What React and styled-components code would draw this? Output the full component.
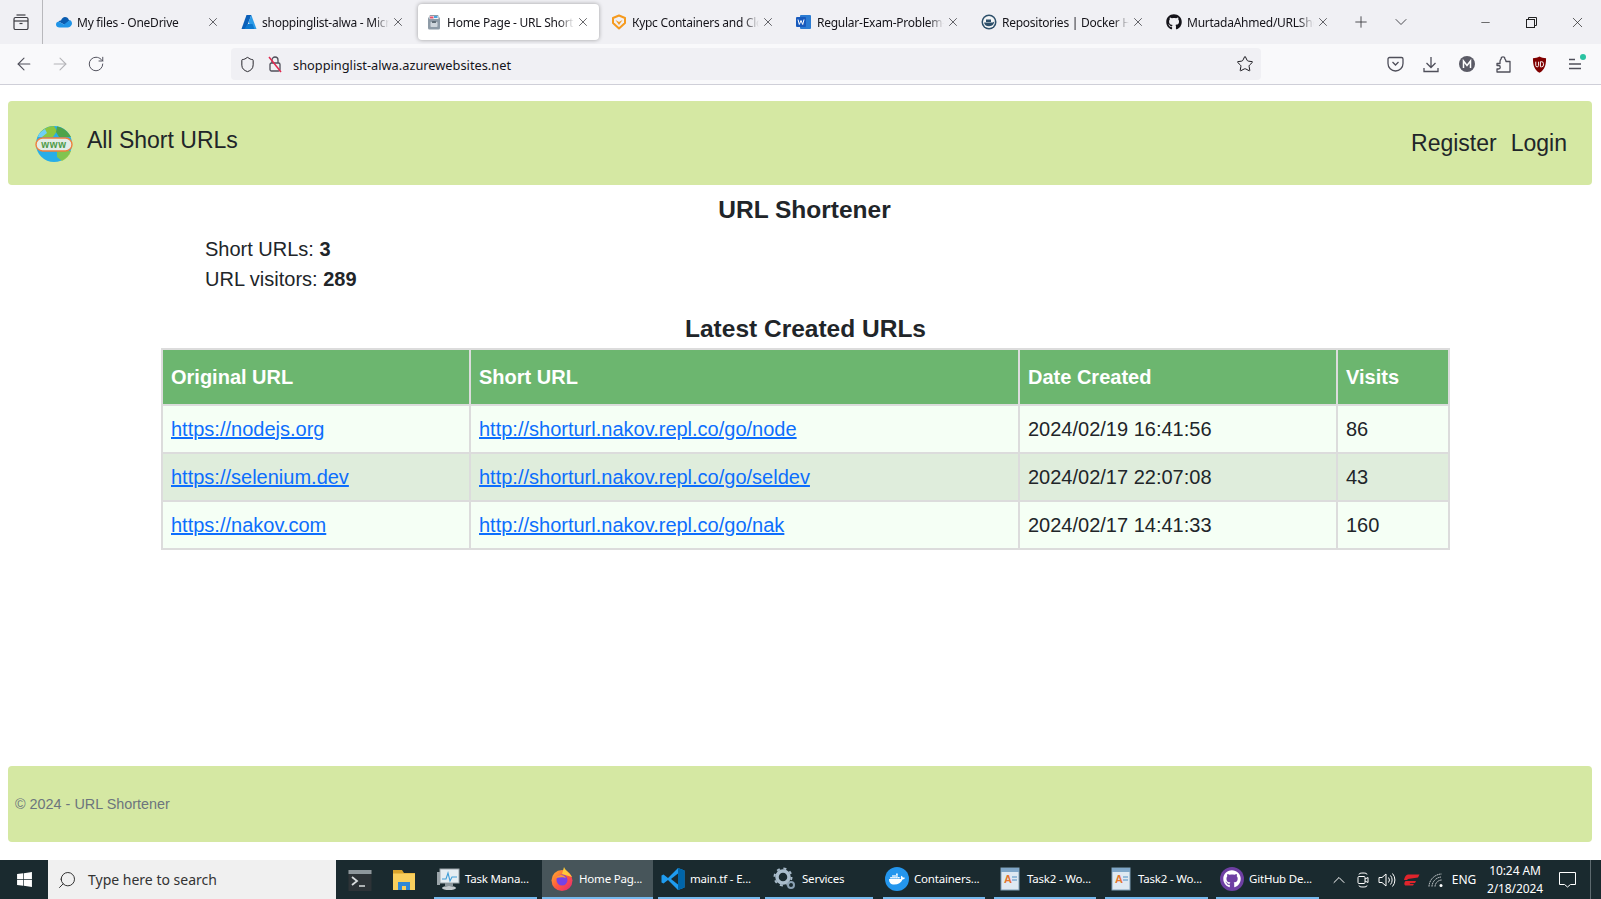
import React from "react";
import styled, { createGlobalStyle } from "styled-components";
import { ArrowLeft, ArrowRight, RotateCw, Shield, Star, X, Plus, ChevronDown, ChevronUp, Minus, Search } from "lucide-react";
import { FaGithub, FaWindows, FaDocker } from "react-icons/fa";

const Global = createGlobalStyle`
  html, body { margin: 0; padding: 0; background: #fff; }
  body { font-family: "Liberation Sans", Arial, sans-serif; color: #212529; }
  * { box-sizing: border-box; }
`;

const Page = styled.div`
  width: 1601px; height: 899px; display: flex; flex-direction: column; overflow: hidden;
`;

/* ---------- browser chrome ---------- */
const TabStrip = styled.div`
  height: 44px; flex: none; background: #f0f0f4; display: flex; align-items: center; color: #15141a;
  font-family: "Noto Sans", sans-serif; font-size: 12px;
`;
const TabListButton = styled.div`
  width: 43px; height: 44px; border-right: 1px solid #b8b8bc; display: flex; align-items: center; justify-content: center; flex: none;
`;
const Tabs = styled.div`
  display: flex; gap: 4px; margin-left: 5px;
`;
const Tab = styled.div`
  width: 181px; height: 36px; border-radius: 4px; display: flex; align-items: center; padding: 0 8px; flex: none;
  background: ${p => (p.$active ? "#fff" : "transparent")};
  box-shadow: ${p => (p.$active ? "0 0 4px rgba(0,0,0,.35)" : "none")};
`;
const FavSlot = styled.span`
  width: 16px; height: 16px; flex: none; display: flex; align-items: center; justify-content: center; margin-right: 5px;
`;
const TabTitle = styled.span`
  flex: 1; min-width: 0; white-space: nowrap; overflow: hidden; letter-spacing: -0.25px;
  -webkit-mask-image: linear-gradient(to right, #000 88%, transparent 100%);
  mask-image: linear-gradient(to right, #000 88%, transparent 100%);
`;
const TabClose = styled.span`
  width: 14px; height: 14px; flex: none; display: flex; align-items: center; justify-content: center; margin-left: 2px; margin-right: 1px;
`;
const StripAction = styled.span`
  display: flex; align-items: center; justify-content: center; flex: none; width: 40px; color: #3c3c42;
`;
const StripActions = styled.div`
  display: flex; margin-left: 2px;
`;
const WindowControls = styled.div`
  display: flex; margin-left: auto; margin-right: 1px; color: #222;
`;
const WindowButton = styled.span`
  width: 46px; display: flex; align-items: center; justify-content: center;
`;
const Toolbar = styled.div`
  height: 41px; flex: none; background: #f9f9fb; border-bottom: 1px solid #cfcfd8; display: flex; align-items: flex-start; color: #4f4f5a;
`;
const NavButtons = styled.div`
  display: flex; width: 231px; padding-left: 6px; height: 40px; align-items: center;
`;
const ToolButton = styled.span`
  width: 36px; flex: none; display: flex; align-items: center; justify-content: center; position: relative;
  color: ${p => (p.$dim ? "#b4b4b8" : "inherit")};
`;
const UrlBar = styled.div`
  width: 1030px; height: 32px; margin-top: 4px; border-radius: 4px; background: #f0f0f4; display: flex; align-items: center; padding: 0 7px 0 2px;
  font-family: "Noto Sans", sans-serif; font-size: 12.8px; color: #15141a;
`;
const UrlIcon = styled.span`
  width: 28px; flex: none; display: flex; align-items: center; justify-content: center;
`;
const UrlText = styled.span`
  margin-left: 4px; padding-top: 1px; flex: 1;
`;
const ToolRight = styled.div`
  display: flex; margin-left: auto; height: 40px; align-items: center; padding-right: 8px;
`;
const Dot = styled.span`
  position: absolute; top: -4px; right: 7px; width: 6px; height: 6px; border-radius: 50%; background: #2ac3a2;
`;

/* ---------- page content ---------- */
const Main = styled.main`
  flex: 1; padding: 16px 9px 18px 8px; display: flex; flex-direction: column; min-height: 0;
`;
const Navbar = styled.nav`
  height: 84px; flex: none; background: #d5e8a3; border-radius: 4px; display: flex; align-items: center; padding: 0 25px 0 27px;
`;
const Brand = styled.div`
  display: flex; align-items: center; gap: 14px; font-size: 23px; margin-top: 2px;
`;
const BrandText = styled.span`
  margin-bottom: 7px;
`;
const NavLinks = styled.div`
  margin-left: auto; display: flex; gap: 14px; font-size: 23px;
`;
const Section = styled.section`
  flex: 1; padding: 10px 144px 0 153px; display: flex; flex-direction: column; min-height: 0;
`;
const Title = styled.h1`
  margin: 0; font-size: 24.5px; line-height: 30px; font-weight: 700; text-align: center;
`;
const Stats = styled.div`
  margin: 9px 0 0 44px; font-size: 20px; line-height: 30px;
`;
const Table = styled.table`
  width: 100%; border-collapse: collapse; table-layout: fixed; font-size: 20px;
`;
const Caption = styled.caption`
  caption-side: top; padding: 0; font-size: 24.5px; line-height: 30px; font-weight: 700; text-align: center; color: #212529; margin-bottom: 4px;
`;
const TableWrap = styled.div`
  margin-top: 20px;
`;
const Th = styled.th`
  height: 56px; background: #6cb66f; color: #fff; border: 2px solid #dcdcdc; text-align: left; padding: 0 8px; font-weight: 700;
  width: ${p => p.$w}px;
`;
const Row = styled.tr`
  background: ${p => (p.$alt ? "#dfeddc" : "#f5fff5")};
`;
const Td = styled.td`
  height: 48px; border: 2px solid #dcdcdc; padding: 0 8px;
`;
const Link = styled.a`
  color: #0d6efd; text-decoration: underline;
`;
const Footer = styled.footer`
  height: 76px; flex: none; background: #d5e8a3; border-radius: 4px; display: flex; align-items: center; padding: 0 7px;
  font-size: 14.4px; color: #6c757d;
`;

/* ---------- taskbar ---------- */
const Taskbar = styled.div`
  height: 39px; flex: none; background: #1a2a2f; display: flex; align-items: center; color: #fff;
  font-family: "Noto Sans", sans-serif; font-size: 11.5px;
`;
const StartButton = styled.div`
  width: 48px; height: 39px; display: flex; align-items: center; justify-content: center; flex: none;
`;
const SearchBox = styled.div`
  width: 288px; height: 39px; background: #f0f0f0; color: #333; display: flex; align-items: center; padding-left: 9px; gap: 11px; font-size: 14px; flex: none;
`;
const PinnedIcons = styled.div`
  display: flex; margin-left: 2px; flex: none;
`;
const PinnedIcon = styled.div`
  width: 44px; height: 39px; display: flex; align-items: center; justify-content: center; flex: none;
`;
const TaskItems = styled.div`
  display: flex; gap: 5px; height: 39px; margin-left: 8px;
`;
const TaskItem = styled.div`
  width: ${p => p.$w}px; height: 39px; display: flex; align-items: center; gap: 5px; padding: 0 0 0 ${p => p.$pl}px; white-space: nowrap; overflow: hidden;
  margin-left: ${p => p.$ml || 0}px; letter-spacing: -0.2px;
  border-bottom: 2px solid #76b9ed;
  background: ${p => (p.$active ? "#47555a" : "transparent")};
`;
const TaskIcon = styled.span`
  width: 24px; height: 24px; flex: none; display: flex; align-items: center; justify-content: center;
`;
const Tray = styled.div`
  margin-left: auto; display: flex; align-items: center; height: 39px;
`;
const TrayIcon = styled.span`
  width: ${p => p.$w || 24}px; flex: none; display: flex; align-items: center; justify-content: center; font-size: 12px;
`;
const Clock = styled.div`
  width: 70px; text-align: center; font-size: 12px; line-height: 18px; margin-left: 1px; letter-spacing: -0.1px;
`;
const Notify = styled.span`
  width: 34px; display: flex; justify-content: center; margin-right: 6px;
`;
const ShowDesktop = styled.span`
  width: 1px; height: 39px; background: #5d6a6f; margin-right: 10px;
`;
const Circle = styled.span`
  width: 24px; height: 24px; border-radius: 50%; background: ${p => p.$bg}; display: flex; align-items: center; justify-content: center;
`;

/* ---------- drawn icons ---------- */
const OneDriveIcon = () => (
  <svg width="16" height="12" viewBox="0 0 16 12"><path d="M5 4.500C5.800 2.200 7.300 1 9 1c1.900 0 3.400 1.200 3.900 3 .3 0 .6 0 .9.100L9 9 2.500 5.500C3 5 4 4.500 5 4.500z" fill="#0a5cb0"/><path d="M3.500 11.500C1.500 11.500 0 10.200 0 8.400 0 7 .9 5.900 2.500 5.500L8 8.500l5.800-4.400C15 4.500 16 5.800 16 7.500c0 .9-.4 1.700-1 2.300-.8 1-2 1.700-3 1.700z" fill="#1f94e8"/></svg>
);
const AzureIcon = () => (
  <svg width="16" height="16" viewBox="0 0 16 16"><path d="M5.500 1h4.800L5 15H.5z" fill="#0a5fb8"/><path d="M10.300 1 15.500 15H11L7.500 8z" fill="#2b9be8"/><path d="M6.500 10h5l2 5H3.500z" fill="#0b78d0"/></svg>
);
const PageIcon = () => (
  <svg width="16" height="16" viewBox="0 0 16 16"><path d="M2 4.500 4 1h8l2 3.500V14a1.500 1.500 0 0 1-1.500 1.500h-9A1.500 1.500 0 0 1 2 14z" fill="#8e9ba7"/><rect x="3.500" y="2" width="9" height="3" fill="#f2f4f6"/><rect x="4" y="2.500" width="3.500" height="2" fill="#e8506a"/><rect x="8" y="2" width="3.500" height="2" fill="#4aa3df"/><rect x="4.500" y="8" width="7" height="5" rx=".8" fill="#cfd6dc"/><rect x="6" y="7" width="4" height="2" rx=".5" fill="#5f6c76"/></svg>
);
const FoxIcon = () => (
  <svg width="16" height="16" viewBox="0 0 16 16"><path d="M8 1.500 14 4v5l-6 5.500L2 9V4z" fill="none" stroke="#f59a1e" strokeWidth="2" strokeLinejoin="round"/><path d="M4.500 6 8 8l3.500-2L8 11z" fill="#f59a1e"/></svg>
);
const WordIcon = () => (
  <svg width="16" height="16" viewBox="0 0 16 16"><rect x="4" y="1" width="11" height="14" rx="1" fill="#2b7cd3"/><rect x="0" y="3" width="10" height="10" rx="1" fill="#185abd"/><path d="m2 5.500 1.300 5L5 6.500l1.700 4 1.300-5" fill="none" stroke="#fff" strokeWidth="1"/></svg>
);
const DockerCircle = ({ size = 16, fill = "#2d4f6a" }) => (
  <svg width={size} height={size} viewBox="0 0 16 16"><circle cx="8" cy="8" r="7.500" fill={fill}/><circle cx="8" cy="8" r="6" fill="#fff" opacity=".95"/><path d="M3 8.500h8.500c1 0 1.500-.8 1.800-1.200.2 1.800-1.500 5-5.300 5-3.200 0-4.500-1.800-5-3.800z" fill={fill}/><rect x="5" y="5.500" width="5" height="2.500" fill={fill}/></svg>
);
const LockOff = () => (
  <svg width="16" height="18" viewBox="0 0 16 18" fill="none" stroke="#4f4f5a" strokeWidth="1.300"><rect x="3" y="8" width="10" height="8" rx="1.500"/><path d="M5 8V5a3 3 0 0 1 6 0v3"/><path d="M2 2l12 15" stroke="#e22850" strokeWidth="1.500"/></svg>
);
const Pocket = () => (
  <svg width="17" height="16" viewBox="0 0 17 16" fill="none" stroke="#4f4f5a" strokeWidth="1.300"><path d="M2.500 1.500h12A1.500 1.500 0 0 1 16 3v4.500a7.500 7.500 0 0 1-15 0V3a1.500 1.500 0 0 1 1.500-1.500z"/><path d="m5.500 6 3 3 3-3"/></svg>
);
const DownloadIcon = () => (
  <svg width="16" height="17" viewBox="0 0 16 17" fill="none" stroke="#4f4f5a" strokeWidth="1.300"><path d="M8 1v10M3.500 7 8 11.500 12.500 7"/><path d="M1 12v3.500h14V12"/></svg>
);
const Puzzle = () => (
  <svg width="15" height="17" viewBox="0 0 15 17" fill="none" stroke="#4f4f5a" strokeWidth="1.300"><path d="M1 7.500h3V5.500C4 4 5 3 5.300 2.500 5 1.500 6 .8 7 .8s2 .7 1.700 1.700C9 3 10 4 10 5.500h4v10.500H1v-3h1.500a1.700 1.700 0 0 0 0-3.500H1z" strokeLinejoin="round"/></svg>
);
const UBlock = () => (
  <svg width="15" height="17" viewBox="0 0 16 18"><path d="M8 0.500c2 1.200 4.500 1.700 7 1.800 0 7.500-1.500 12.500-7 15.500-5.500-3-7-8-7-15.500 2.500-.1 5-.6 7-1.800z" fill="#800000"/><path d="M4 6v4a1.500 1.500 0 0 0 3 0V6M9 6v5.500h1.200a2 2 0 0 0 2-2V8a2 2 0 0 0-2-2z" fill="none" stroke="#fff" strokeWidth="1"/></svg>
);
const Avatar = () => (
  <svg width="16" height="16" viewBox="0 0 16 16"><circle cx="8" cy="8" r="8" fill="#5b5b66"/><path d="M4.500 12V5l3.500 4.500L11.500 5v7" fill="none" stroke="#fff" strokeWidth="1.500"/></svg>
);
const MenuIcon = () => (
  <svg width="14" height="12" viewBox="0 0 14 12" fill="none" stroke="#4f4f5a" strokeWidth="1.300"><path d="M1 1.500h6M1 6h12M1 10.500h12"/></svg>
);
const TabsIcon = () => (
  <svg width="16" height="16" viewBox="0 0 16 16" fill="none" stroke="#3c3c42" strokeWidth="1.200"><rect x="1" y="3.500" width="14" height="12" rx="1.500"/><path d="M3.500 1h9"/><path d="M1 7h14"/><path d="M6.500 9.500h3"/></svg>
);
const RestoreIcon = () => (
  <svg width="11" height="11" viewBox="0 0 11 11" fill="none" stroke="#222" strokeWidth="1"><rect x="0.500" y="2.500" width="8" height="8"/><path d="M2.500 2.500v-2h8v8h-2"/></svg>
);
const Globe = () => (
  <svg width="38" height="38" viewBox="0 0 38 38">
    <circle cx="19" cy="19" r="18" fill="#27aee8"/>
    <path d="M9 4a18 18 0 0 1 10-3l3 5-4 6H4C4 9 6 6 9 4z" fill="#8cc63f"/>
    <path d="M22 1.500c6 1 11 5 14 10.500H24l-3-5z" fill="#4ea34a"/>
    <path d="M22 26h14c-1.500 4.500-5 8-9 10l-5-4z" fill="#8cc63f" opacity=".9"/>
    <path d="M4 9a18 18 0 0 1 6-5l2 4-5 4H3z" fill="#6fd0f5"/>
    <rect x="1" y="13" width="36" height="13" rx="6.500" fill="#e3ece6" stroke="#f07f3c" strokeWidth="1.400"/>
    <text x="19" y="23" textAnchor="middle" fontFamily="Liberation Sans, sans-serif" fontWeight="700" fontSize="10" letterSpacing=".8" fill="#4e9b47">www</text>
  </svg>
);
const TerminalIcon = () => (
  <svg width="24" height="24" viewBox="0 0 24 24"><rect x="0.500" y="2" width="23" height="21" fill="#2d3337"/><rect x="0.500" y="2" width="23" height="4" fill="#8e979c"/><path d="m4 9 5 4-5 4" fill="none" stroke="#d8dcde" strokeWidth="1.800"/><path d="M11 18h6" stroke="#d8dcde" strokeWidth="1.500"/></svg>
);
const FolderIcon = () => (
  <svg width="22" height="24" viewBox="0 0 22 24"><path d="M0 2h9l2 3h11v4H0z" fill="#d9a32c"/><rect y="5.500" width="22" height="16.500" fill="#f9cf5d"/><rect x="5" y="14" width="12" height="8" fill="#2f88d8"/><rect x="9" y="18" width="4" height="4" fill="#f9cf5d"/></svg>
);
const TaskMgrIcon = () => (
  <svg width="24" height="24" viewBox="0 0 24 24"><rect x="4" y="2" width="19" height="14" fill="#e6edf1" stroke="#9aa4a9"/><path d="m6 12 4 0 2-6 2 8 2-4 5 0" fill="none" stroke="#3f9ed8" strokeWidth="1.100"/><path d="M1 5h3v13H1z" fill="#9aa4a9"/><rect x="9" y="16" width="8" height="3" fill="#8d979c"/><ellipse cx="13" cy="21" rx="7" ry="2" fill="#c3c9cc"/></svg>
);
const FirefoxIcon = () => (
  <svg width="24" height="24" viewBox="0 0 24 24"><defs><linearGradient id="ff" x1="0" y1="0" x2="1" y2="1"><stop offset="0" stopColor="#ffb32c"/><stop offset=".5" stopColor="#ff5a3c"/><stop offset="1" stopColor="#e3257b"/></linearGradient></defs><circle cx="12" cy="13.500" r="10.500" fill="url(#ff)"/><path d="M14 0c1 3 5 5 8 10l-10-3z" fill="#ffc93a"/><circle cx="12" cy="13" r="5.500" fill="#7542e5"/><path d="M6 11c2-4 8-4 10-0-2-1-6-1-10 0z" fill="#ff9a2e"/></svg>
);
const VSCodeIcon = () => (
  <svg width="24" height="24" viewBox="0 0 24 24"><path d="M17 1 7 11 2.500 7.500 0.500 8.500v7l2 1L7 13l10 10 6.500-2.500v-17z" fill="#1f9cf0"/><path d="M17 6.500 10 12l7 5.500z" fill="#1a2a2f"/><path d="M17 1l6.500 2.500v17L17 23z" fill="#0065a9"/></svg>
);
const GearIcon = () => (
  <svg width="24" height="24" viewBox="0 0 24 24"><circle cx="10" cy="10" r="6" fill="none" stroke="#a9bccb" strokeWidth="3.500"/><circle cx="10" cy="10" r="8.500" fill="none" stroke="#a9bccb" strokeWidth="2" strokeDasharray="3 3.700"/><circle cx="18" cy="18" r="3" fill="none" stroke="#8ba1b3" strokeWidth="2"/></svg>
);
const WordDoc = () => (
  <svg width="20" height="24" viewBox="0 0 20 24"><rect x="1" y="1" width="18" height="22" fill="#dfe9f2" stroke="#7f9fb8"/><rect x="1" y="1" width="18" height="4" fill="#7fa7c9"/><text x="4" y="16" fontFamily="Liberation Sans, sans-serif" fontSize="11" fontWeight="700" fill="#e4752c">A</text><path d="M12 10h5M12 13h5" stroke="#4f8fc4"/></svg>
);
const RedTray = () => (
  <svg width="17" height="12" viewBox="0 0 17 12"><path d="M5 .5h11.500L15 3.500l-10 1.500-1 1H1C1.500 3 3 .5 5 .5z" fill="#e0242c"/><path d="M2.500 7h10.500l-1 2-5 .3-.3.7H11l-1 1.500H3C1 11.500.8 9 2.500 7z" fill="#e0242c"/></svg>
);
const CameraTray = () => (
  <svg width="12" height="18" viewBox="0 0 12 18" fill="none" stroke="#fff" strokeWidth="1"><path d="M2 3.500C2 2.500 3 2 6 2s4 .5 4 1.500M2 14.500c0 1 1 1.500 4 1.500s4-.5 4-1.500"/><rect x="1" y="5.500" width="7" height="7" rx="1"/><path d="M8 8l3-1.500v5L8 10"/></svg>
);
const SpeakerTray = () => (
  <svg width="18" height="16" viewBox="0 0 18 16" fill="none" stroke="#fff" strokeWidth="1"><path d="M1 5.500h3L8 2v12l-4-3.500H1z"/><path d="M10.500 5.500a4 4 0 0 1 0 5M12.500 3.500a7 7 0 0 1 0 9M14.500 1.500a10 10 0 0 1 0 13"/></svg>
);
const WifiTray = () => (
  <svg width="16" height="16" viewBox="0 0 16 16" fill="none" stroke="#d8dcde" strokeWidth="1"><path d="M1 14.500A13 13 0 0 1 13.500 2M4 14.500A10 10 0 0 1 13.500 5M7 14.500A7 7 0 0 1 13.500 8" strokeDasharray="1.500 .6"/><circle cx="13" cy="13.500" r="1.500" fill="#fff" stroke="none"/></svg>
);
const NotifyIcon = () => (
  <svg width="17" height="16" viewBox="0 0 17 16" fill="none" stroke="#fff" strokeWidth="1"><path d="M.5.500h16v12h-5L8.500 15l-3-2.500h-5z"/></svg>
);

const tabs = [
  { t: "My files - OneDrive", i: <OneDriveIcon /> },
  { t: "shoppinglist-alwa - Microsoft Azure", i: <AzureIcon /> },
  { t: "Home Page - URL Shortener", i: <PageIcon />, active: true },
  { t: "Курс Containers and Cloud", i: <FoxIcon /> },
  { t: "Regular-Exam-Problem-Description", i: <WordIcon /> },
  { t: "Repositories | Docker Hub", i: <DockerCircle /> },
  { t: "MurtadaAhmed/URLShortener", i: <FaGithub size={16} color="#15141a" /> },
];
const rows = [
  ["https://nodejs.org", "http://shorturl.nakov.repl.co/go/node", "2024/02/19 16:41:56", "86"],
  ["https://selenium.dev", "http://shorturl.nakov.repl.co/go/seldev", "2024/02/17 22:07:08", "43"],
  ["https://nakov.com", "http://shorturl.nakov.repl.co/go/nak", "2024/02/17 14:41:33", "160"],
];
const tasks = [
  { t: "Task Mana...", i: <TaskMgrIcon />, w: 103, pl: 2 },
  { t: "Home Pag...", i: <FirefoxIcon />, active: true, w: 111, pl: 8 },
  { t: "main.tf - E...", i: <VSCodeIcon />, w: 102, pl: 3 },
  { t: "Services", i: <GearIcon />, w: 108, pl: 8 },
  { t: "Containers...", i: <Circle $bg="#2496ed"><FaDocker size={16} color="#fff" /></Circle>, w: 102, pl: 2, ml: 5 },
  { t: "Task2 - Wo...", i: <WordDoc />, w: 102, pl: 4, ml: 4 },
  { t: "Task2 - Wo...", i: <WordDoc />, w: 103, pl: 4, ml: 4 },
  { t: "GitHub De...", i: <Circle $bg="#6e3fa3"><FaGithub size={18} color="#fff" /></Circle>, w: 103, pl: 4, ml: 3 },
];

export default function App() {
  return (
    <Page>
      <Global />
      <TabStrip>
        <TabListButton><TabsIcon /></TabListButton>
        <Tabs>
          {tabs.map(tab => (
            <Tab key={tab.t} $active={tab.active}>
              <FavSlot>{tab.i}</FavSlot>
              <TabTitle>{tab.t}</TabTitle>
              <TabClose><X size={16} strokeWidth={1.1} /></TabClose>
            </Tab>
          ))}
        </Tabs>
        <StripActions>
          <StripAction><Plus size={18} strokeWidth={1.2} /></StripAction>
          <StripAction><ChevronDown size={20} strokeWidth={1.1} /></StripAction>
        </StripActions>
        <WindowControls>
          <WindowButton><Minus size={13} strokeWidth={1.2} /></WindowButton>
          <WindowButton><RestoreIcon /></WindowButton>
          <WindowButton><X size={17} strokeWidth={1} /></WindowButton>
        </WindowControls>
      </TabStrip>
      <Toolbar>
        <NavButtons>
          <ToolButton><ArrowLeft size={20} strokeWidth={1.3} /></ToolButton>
          <ToolButton $dim><ArrowRight size={20} strokeWidth={1.3} /></ToolButton>
          <ToolButton><RotateCw size={18} strokeWidth={1.3} /></ToolButton>
        </NavButtons>
        <UrlBar>
          <UrlIcon><Shield size={17} strokeWidth={1.3} /></UrlIcon>
          <UrlIcon><LockOff /></UrlIcon>
          <UrlText>shoppinglist-alwa.azurewebsites.net</UrlText>
          <Star size={18} strokeWidth={1.3} />
        </UrlBar>
        <ToolRight>
          <ToolButton><Pocket /></ToolButton>
          <ToolButton><DownloadIcon /></ToolButton>
          <ToolButton><Avatar /></ToolButton>
          <ToolButton><Puzzle /></ToolButton>
          <ToolButton><UBlock /></ToolButton>
          <ToolButton><MenuIcon /><Dot /></ToolButton>
        </ToolRight>
      </Toolbar>

      <Main>
        <Navbar>
          <Brand><Globe /><BrandText>All Short URLs</BrandText></Brand>
          <NavLinks><span>Register</span><span>Login</span></NavLinks>
        </Navbar>
        <Section>
          <Title>URL Shortener</Title>
          <Stats>
            <div>Short URLs: <b>3</b></div>
            <div>URL visitors: <b>289</b></div>
          </Stats>
          <TableWrap>
            <Table>
              <Caption>Latest Created URLs</Caption>
              <thead>
                <tr>
                  <Th $w={308}>Original URL</Th>
                  <Th $w={549}>Short URL</Th>
                  <Th $w={318}>Date Created</Th>
                  <Th $w={112}>Visits</Th>
                </tr>
              </thead>
              <tbody>
                {rows.map((r, i) => (
                  <Row key={r[0]} $alt={i === 1}>
                    <Td><Link href="#">{r[0]}</Link></Td>
                    <Td><Link href="#">{r[1]}</Link></Td>
                    <Td>{r[2]}</Td>
                    <Td>{r[3]}</Td>
                  </Row>
                ))}
              </tbody>
            </Table>
          </TableWrap>
        </Section>
        <Footer>© 2024 - URL Shortener</Footer>
      </Main>

      <Taskbar>
        <StartButton><FaWindows size={17} color="#fff" /></StartButton>
        <SearchBox><Search size={20} strokeWidth={1.2} style={{ transform: "scaleX(-1)" }} />Type here to search</SearchBox>
        <PinnedIcons>
          <PinnedIcon><TerminalIcon /></PinnedIcon>
          <PinnedIcon><FolderIcon /></PinnedIcon>
        </PinnedIcons>
        <TaskItems>
          {tasks.map((task, i) => (
            <TaskItem key={i} $active={task.active} $w={task.w} $pl={task.pl} $ml={task.ml}>
              <TaskIcon>{task.i}</TaskIcon>
              {task.t}
            </TaskItem>
          ))}
        </TaskItems>
        <Tray>
          <TrayIcon><ChevronUp size={20} strokeWidth={1.2} /></TrayIcon>
          <TrayIcon><CameraTray /></TrayIcon>
          <TrayIcon><SpeakerTray /></TrayIcon>
          <TrayIcon><RedTray /></TrayIcon>
          <TrayIcon $w={26}><WifiTray /></TrayIcon>
          <TrayIcon $w={30}>ENG</TrayIcon>
          <Clock>10:24 AM<br />2/18/2024</Clock>
          <Notify><NotifyIcon /></Notify>
          <ShowDesktop />
        </Tray>
      </Taskbar>
    </Page>
  );
}
